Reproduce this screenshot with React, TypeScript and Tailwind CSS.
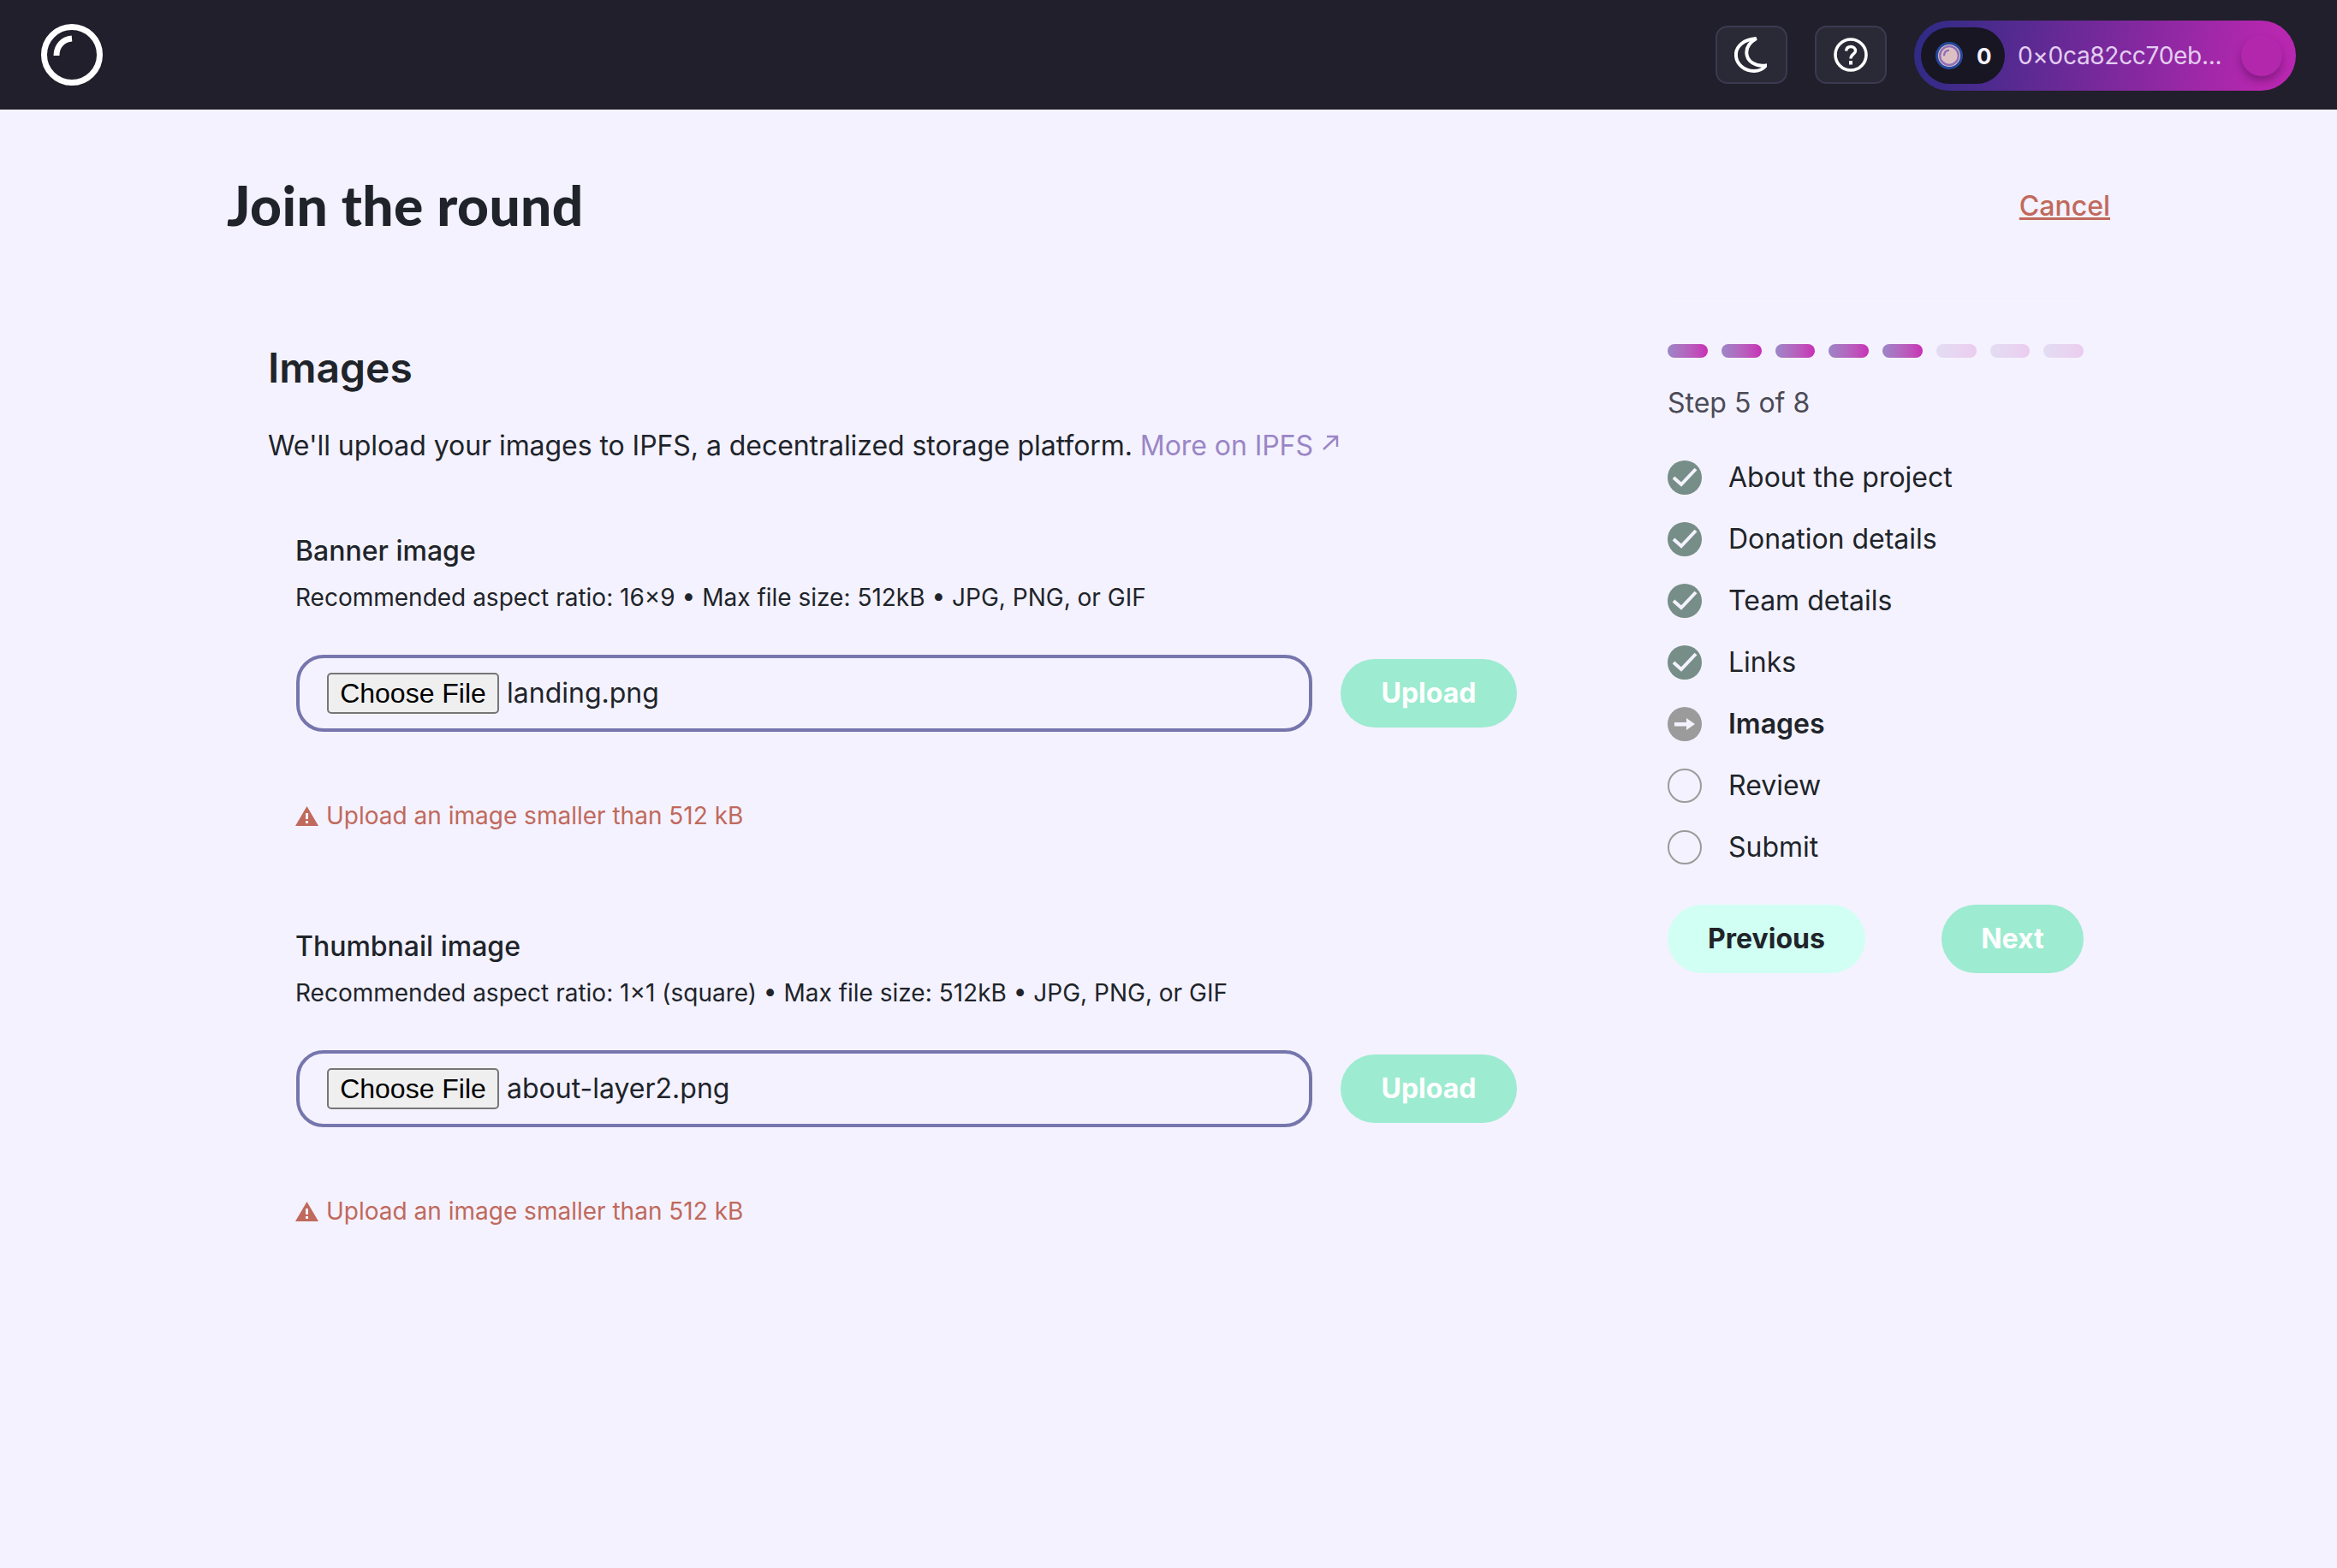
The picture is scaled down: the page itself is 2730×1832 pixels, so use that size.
const steps = [
  { label: "About the project", state: "done" },
  { label: "Donation details", state: "done" },
  { label: "Team details", state: "done" },
  { label: "Links", state: "done" },
  { label: "Images", state: "current" },
  { label: "Review", state: "todo" },
  { label: "Submit", state: "todo" },
];

const fields = [
  {
    title: "Banner image",
    hint: "Recommended aspect ratio: 16×9 • Max file size: 512kB • JPG, PNG, or GIF",
    file: "landing.png",
  },
  {
    title: "Thumbnail image",
    hint: "Recommended aspect ratio: 1×1 (square) • Max file size: 512kB • JPG, PNG, or GIF",
    file: "about-layer2.png",
  },
];

function Logo({ className, color = "#fff" }: { className: string; color?: string }) {
  return (
    <svg viewBox="0 0 72 72" fill="none" className={className}>
      <circle cx="36" cy="36" r="32.5" stroke={color} strokeWidth="7" />
      <path d="M18 37 C18 26 25 18 36 17" stroke={color} strokeWidth="7" />
    </svg>
  );
}

function MoonIcon() {
  return (
    <svg viewBox="0 0 40 44" fill="none" className="w-[38px] h-[42px] mr-[2px]">
      <path
        d="M27 2 C12 3 2 11 2 22 C2 34 13 42 24 42 C31 42 36 39 39 35 C26 37 15 30 15 19 C15 12 20 6 27 2 Z"
        stroke="#fff"
        strokeWidth="4.2"
      />
    </svg>
  );
}

function HelpIcon() {
  return (
    <svg viewBox="0 0 40 40" fill="none" className="w-[40px] h-[40px]">
      <circle cx="20" cy="20" r="18" stroke="#fff" strokeWidth="3.6" />
      <path
        d="M14.5 15.5 C15 12 17.5 10.5 20 10.5 C23 10.5 25.5 12.5 25.5 15.5 C25.5 19 20 19.5 20 24.5"
        stroke="#fff"
        strokeWidth="3.4"
      />
      <rect x="18" y="27" width="4" height="4.5" fill="#fff" />
    </svg>
  );
}

function Header() {
  return (
    <header className="h-[128px] bg-[#201f2b] flex items-center justify-between pl-[48px] pr-[48px]">
      <Logo className="w-[72px] h-[72px]" />
      <div className="flex items-center">
        <button className="w-[84px] h-[68px] rounded-[14px] bg-[#2a2936] border-2 border-[#3b3a50] flex items-center justify-center">
          <MoonIcon />
        </button>
        <button className="ml-[32px] w-[84px] h-[68px] rounded-[14px] bg-[#2a2936] border-2 border-[#3b3a50] flex items-center justify-center">
          <HelpIcon />
        </button>
        <div className="ml-[32px] mt-[2px] w-[446px] h-[82px] rounded-full bg-[linear-gradient(100deg,#2d2b84,#b827b0_92%)] flex items-center pl-[8px] pr-[16px]">
          <div className="w-[98px] h-[66px] rounded-full bg-[#171622] flex items-center pl-[17px]">
            <div className="w-[32px] h-[32px] rounded-full border-[3px] border-[#25479c] bg-[#dcc0c4] flex items-center justify-center">
              <Logo className="w-[24px] h-[24px]" color="#8d6fb8" />
            </div>
            <span className="ml-[16px] text-[26px] font-bold text-[#f4f2fe]">0</span>
          </div>
          <span className="ml-[15px] text-[28px] leading-none text-[#e3cdf0] tracking-[-0.3px]">0×0ca82cc70eb...</span>
          <div className="ml-auto w-[48px] h-[48px] rounded-full bg-[#b327ad] shadow-[0_6px_10px_rgba(60,10,70,0.4)]" />
        </div>
      </div>
    </header>
  );
}

function FileField({ title, hint, file }: { title: string; hint: string; file: string }) {
  return (
    <section className="pl-[32px] pb-[107px]">
      <h3 className="text-[32px] leading-[48px] font-medium text-[#20242a]">{title}</h3>
      <p className="mt-[8px] text-[28px] leading-[44px] text-[#20242a]">{hint}</p>
      <div className="mt-[45px] flex items-center">
        <div className="ml-[1px] w-[1187px] h-[90px] rounded-[32px] border-4 border-[#7676ad] flex items-center pl-[32px]">
          <button className="w-[201px] h-[48px] rounded-[5px] border-2 border-[#767676] bg-[#efefef] font-['Liberation_Sans',sans-serif] text-[32px] text-black leading-none">
            Choose File
          </button>
          <span className="ml-[9px] text-[32px] text-[#20242a]">{file}</span>
        </div>
        <button className="ml-[33px] w-[206px] h-[80px] rounded-full bg-[#9debd0] text-white text-[32px] font-bold">
          Upload
        </button>
      </div>
      <div className="mt-[76px] flex items-center text-[#c0695c] text-[28px] leading-[44px]">
        <svg viewBox="0 0 27 23" className="w-[27px] h-[23px] fill-[#c0695c]">
          <path fillRule="evenodd" d="M13.5 0 L27 23 H0 Z M12 8 h3 v7 h-3 Z M12 17 h3 v3 h-3 Z" />
        </svg>
        <span className="ml-[9px]">Upload an image smaller than 512 kB</span>
      </div>
    </section>
  );
}

function StepIcon({ state }: { state: string }) {
  if (state === "done") {
    return (
      <span className="w-[40px] h-[40px] rounded-full bg-[#768e87] shrink-0">
        <svg viewBox="0 0 40 40" fill="none" className="w-[40px] h-[40px]">
          <polyline points="7,20 16,28 33,10" stroke="#f4f2fe" strokeWidth="4" />
        </svg>
      </span>
    );
  }
  if (state === "current") {
    return (
      <span className="w-[40px] h-[40px] rounded-full bg-[#9b9b9b] shrink-0 flex items-center justify-center">
        <svg viewBox="0 0 24 14" className="w-[24px] h-[14px] fill-[#f4f2fe]">
          <path d="M0 5 H14 V0 L24 7 L14 14 V9.5 H0 Z" />
        </svg>
      </span>
    );
  }
  return <span className="w-[40px] h-[40px] rounded-full border-2 border-[#9b9b9b] shrink-0" />;
}

function Sidebar() {
  return (
    <aside className="w-[486px] pt-[49px] border-t-2 border-[#f6f4ff]">
      <div className="flex gap-[16px]">
        {[0, 1, 2, 3, 4, 5, 6, 7].map((i) => (
          <div
            key={i}
            className={`flex-1 h-[16px] rounded-full bg-gradient-to-r from-[#9b86c6] to-[#c82db6] ${i > 4 ? "opacity-20" : ""}`}
          />
        ))}
      </div>
      <p className="mt-[29px] text-[32px] leading-[48px] text-[#4b4b58]">Step 5 of 8</p>
      <ul className="mt-[43px] flex flex-col gap-[32px]">
        {steps.map((step) => (
          <li key={step.label} className="flex items-center h-[40px]">
            <StepIcon state={step.state} />
            <span className={`ml-[31px] text-[32px] text-[#20242a] ${step.state === "current" ? "font-semibold" : ""}`}>
              {step.label}
            </span>
          </li>
        ))}
      </ul>
      <div className="mt-[47px] flex justify-between">
        <button className="w-[231px] h-[80px] rounded-full bg-[#d1fff4] text-[32px] font-bold text-[#20242a]">
          Previous
        </button>
        <button className="w-[166px] h-[80px] rounded-full bg-[#9debd0] text-[32px] font-bold text-white">
          Next
        </button>
      </div>
    </aside>
  );
}

export default function App() {
  return (
    <div className="min-h-[1832px] bg-[#f4f2fe] font-['Inter',sans-serif]">
      <Header />
      <main className="pl-[265px] pr-[265px]">
        <div className="flex items-center justify-between pt-[80px]">
          <h1 className="font-['Lato',sans-serif] font-black text-[64px] leading-[64px] tracking-[0.4px] text-[#20242a]">Join the round</h1>
          <a className="mt-[2px] text-[32px] font-medium text-[#c0695c] underline">Cancel</a>
        </div>
        <div className="mt-[79px] flex">
          <div className="w-[1683px] pl-[48px] pt-[43px]">
            <h2 className="text-[48px] leading-[72px] font-semibold text-[#20242a]">Images</h2>
            <p className="mt-[31px] text-[32px] leading-[48px] tracking-[-0.06px] text-[#20242a]">
              We'll upload your images to IPFS, a decentralized storage platform.{" "}
              <a className="text-[#9a86c6]">
                More on IPFS
                <svg viewBox="0 0 20 18" fill="none" className="inline w-[20px] h-[18px] ml-[10px] mb-[13px]">
                  <path d="M2 17 L18 2 M6 2 H18 V14" stroke="#9a86c6" strokeWidth="2.4" />
                </svg>
              </a>
            </p>
            <div className="mt-[75px]">
              {fields.map((f) => (
                <FileField key={f.title} {...f} />
              ))}
            </div>
          </div>
          <Sidebar />
        </div>
      </main>
    </div>
  );
}
